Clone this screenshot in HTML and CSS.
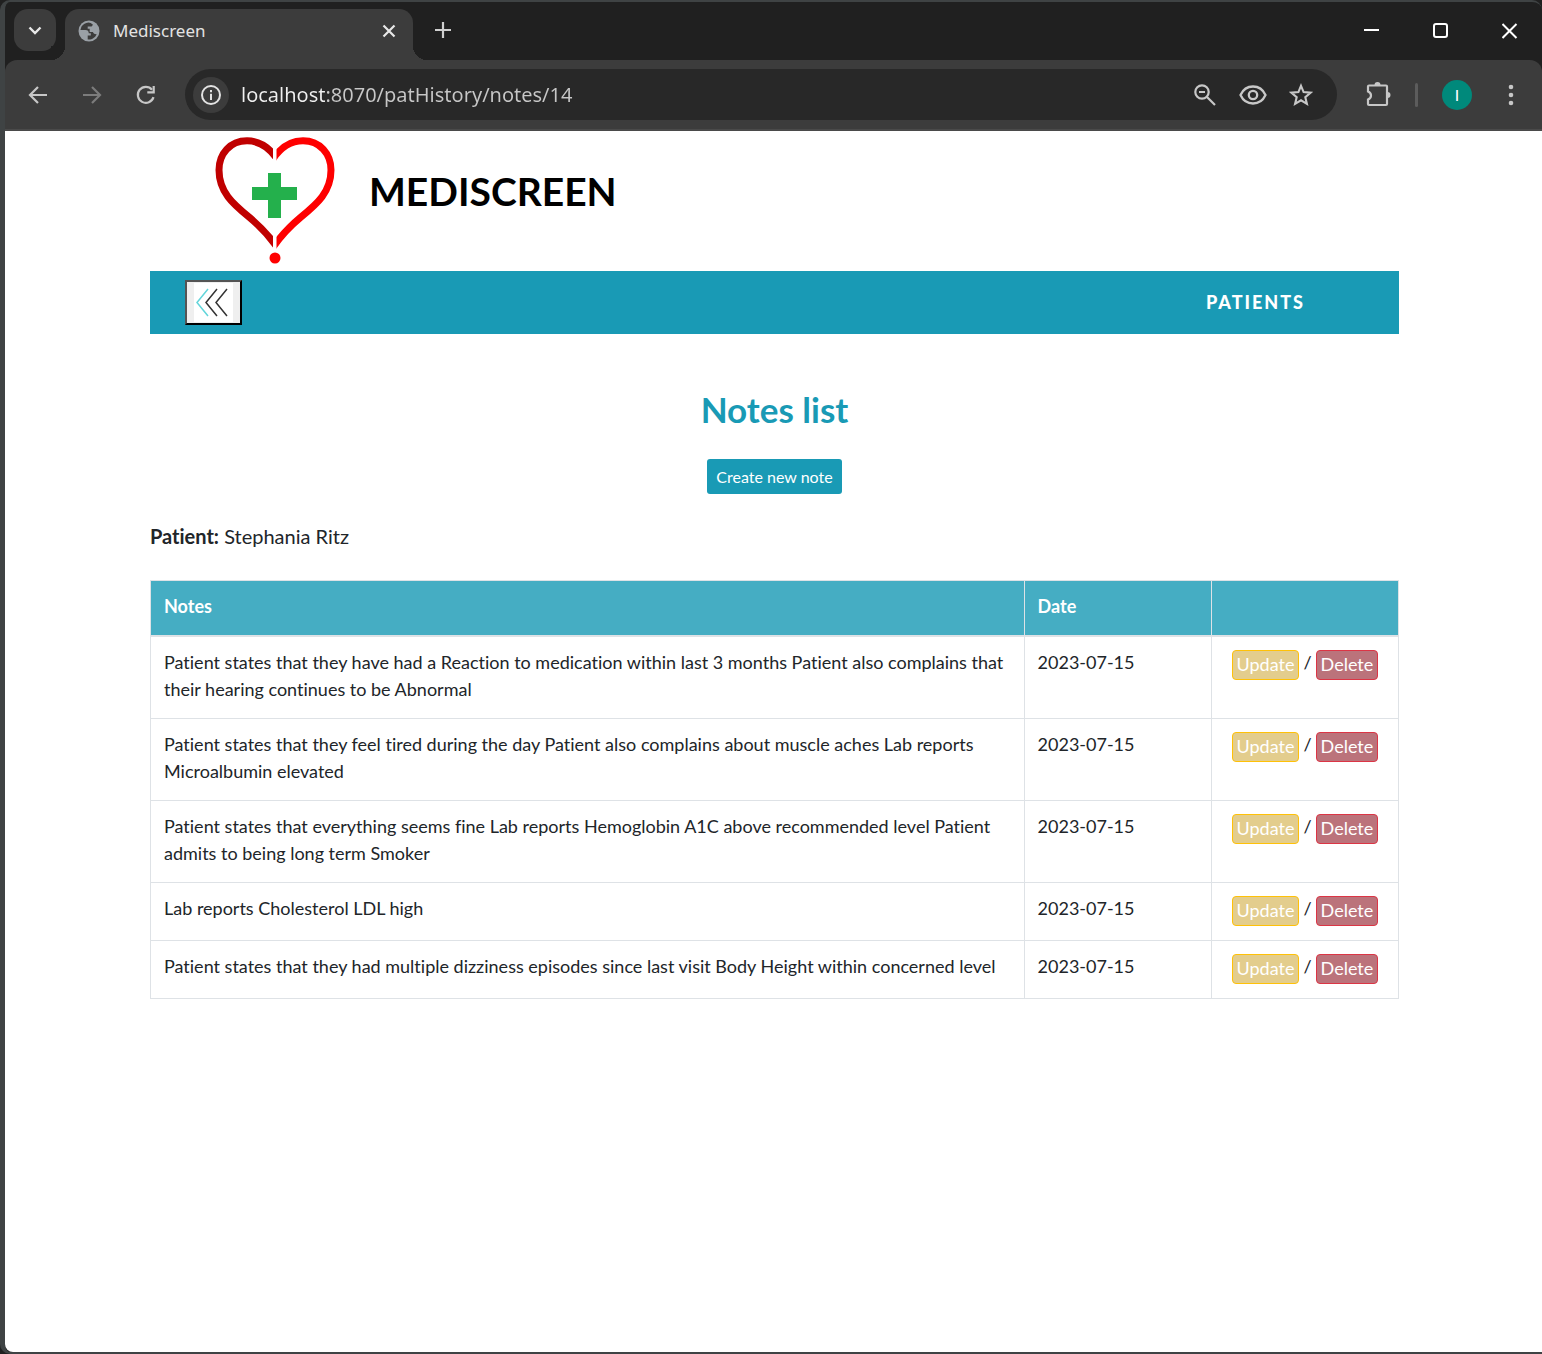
FILE: index.html
```html
<!DOCTYPE html>
<html lang="en">
<head>
<meta charset="utf-8">
<title>Mediscreen</title>
<link rel="stylesheet" href="styles.css">
</head>
<body>
<div class="window">
  <div class="tabstrip">
    <button class="tab-search" aria-label="Search tabs">
      <svg width="14" height="14" viewBox="0 0 14 14"><path d="M1.500 4.500L7 10l5.500-5.500" fill="none" stroke="#e8e8e8" stroke-width="2.400"/></svg>
    </button>
    <div class="tab">
      <svg class="globe" width="22" height="22" viewBox="0 0 22 22"><circle cx="11" cy="11" r="10.500" fill="#9aa0a6"/><path d="M10.500 2.500Q6 3 3.500 6.500L2.400 10h5.100c2.200 0 3.300 1.200 3.300 3.300h2v2.200H9.700V19.500c4 .5 7.500-1.800 9-5.200-1.700.3-3.100-.6-3.800-2.200h-3.200V8.800h-2V6.600h2.800c1.500 0 2.200-.8 2.200-2.300C13.400 3.500 12 2.500 10.500 2.500z" fill="#3c3c3c"/></svg>
      <span class="tab-title">Mediscreen</span>
      <button class="plain tab-close" aria-label="Close tab">
        <svg width="14" height="14" viewBox="0 0 14 14"><path d="M1.500 1.500l11 11m0-11l-11 11" stroke="#e8e8e8" stroke-width="2.200"/></svg>
      </button>
    </div>
    <button class="plain new-tab" aria-label="New tab">
      <svg width="16" height="16" viewBox="0 0 16 16"><path d="M8 0v16M0 8h16" stroke="#d0d0d0" stroke-width="2.200"/></svg>
    </button>
    <div class="window-controls">
      <button class="plain" aria-label="Minimize"><svg width="16" height="16" viewBox="0 0 16 16"><path d="M0 7h15" stroke="#fff" stroke-width="2"/></svg></button>
      <button class="plain" aria-label="Maximize"><svg width="16" height="16" viewBox="0 0 16 16"><rect x="1" y="1" width="13" height="13" rx="2" fill="none" stroke="#fff" stroke-width="2"/></svg></button>
      <button class="plain" aria-label="Close"><svg width="16" height="16" viewBox="0 0 16 16"><path d="M.5 1l14 14M14.500 1l-14 14" stroke="#fff" stroke-width="2"/></svg></button>
    </div>
  </div>

  <div class="toolbar">
    <div class="nav-buttons">
      <button class="plain" aria-label="Back"><svg width="20" height="20" viewBox="0 0 20 20"><path d="M19 10H2.500M10 2l-8 8 8 8" fill="none" stroke="#c7c7c7" stroke-width="2.200"/></svg></button>
      <button class="plain" aria-label="Forward"><svg width="20" height="20" viewBox="0 0 20 20"><path d="M1 10h16.500M10 2l8 8-8 8" fill="none" stroke="#7c7c7c" stroke-width="2.200"/></svg></button>
      <button class="plain" aria-label="Reload"><svg width="20" height="20" viewBox="0 0 20 20"><path d="M17.500 12.200A8 8 0 1 1 16 4.700" fill="none" stroke="#c7c7c7" stroke-width="2.200"/><path d="M18.800 1v7.500h-7.500V6.300h5.300V1z" fill="#c7c7c7"/></svg></button>
    </div>
    <div class="omnibox">
      <button class="site-info" aria-label="View site information"><svg width="22" height="22" viewBox="0 0 22 22"><circle cx="11" cy="11" r="9" fill="none" stroke="#e3e3e3" stroke-width="2"/><path d="M11 9.800V16M11 6v2.200" stroke="#e3e3e3" stroke-width="2"/></svg></button>
      <input class="url" type="text" aria-label="Address" value="localhost:8070/patHistory/notes/14">
      <button class="plain" aria-label="Zoom"><svg width="24" height="24" viewBox="0 0 24 24"><g fill="none" stroke="#c7c7c7" stroke-width="2.200"><circle cx="9" cy="9" r="6.700"/><path d="M14 14l8 8M6 9h6"/></g></svg></button>
      <button class="plain" aria-label="Preview"><svg width="28" height="22" viewBox="0 0 28 22"><g fill="none" stroke="#c7c7c7" stroke-width="2.300"><path d="M1.500 11C4 5.500 8.500 2.500 14 2.500S24 5.500 26.500 11C24 16.500 19.500 19.500 14 19.500S4 16.500 1.500 11z"/><circle cx="14" cy="11" r="4.200"/></g></svg></button>
      <button class="plain" aria-label="Bookmark"><svg width="24" height="24" viewBox="0 0 24 24"><path d="M12 2.800l2.600 6.300 6.900.6-5.200 4.500 1.600 6.700L12 17.300l-5.900 3.600 1.600-6.700-5.200-4.500 6.900-.6z" fill="none" stroke="#c7c7c7" stroke-width="2.100"/></svg></button>
    </div>
    <button class="plain extensions" aria-label="Extensions"><svg width="26" height="26" viewBox="0 0 26 26"><path d="M4 3.500h17a1 1 0 0 1 1 1V22a1 1 0 0 1-1 1H4a1 1 0 0 1-1-1v-4.500c4-1.500 4-6.500 0-8V4.500a1 1 0 0 1 1-1z" fill="none" stroke="#c7c7c7" stroke-width="2.200"/><path d="M9.500 3a3 3 0 0 1 6 0zM22.500 10a3 3 0 0 1 0 6z" fill="#c7c7c7"/></svg></button>
    <span class="divider"></span>
    <button class="avatar" aria-label="Profile">I</button>
    <button class="plain menu" aria-label="Menu"><svg width="6" height="22" viewBox="0 0 6 22"><g fill="#c7c7c7"><circle cx="3" cy="3" r="2.300"/><circle cx="3" cy="11" r="2.300"/><circle cx="3" cy="19" r="2.300"/></g></svg></button>
  </div>

  <main class="page">
    <div class="container">
      <header class="brand">
        <svg class="logo" width="120" height="128" viewBox="0 0 120 128">
          <defs>
            <clipPath id="left-half"><path d="M0 0h58v128H0z"/></clipPath>
            <clipPath id="right-half"><path d="M61.500 0H120v128H61.500z"/></clipPath>
          </defs>
          <g fill="none" stroke-width="7">
            <path clip-path="url(#left-half)" d="M64 26C55 11 45 4.800 32 4.800C15 4.800 4 18 4 34C4 56 18 68 34 81C46 91 54 99 64 114" stroke="#c00000"/>
            <path clip-path="url(#right-half)" d="M56 26C65 11 75 4.800 88 4.800C105 4.800 116 18 116 34C116 56 102 68 86 81C74 91 66 99 56 114" stroke="#fe0000"/>
          </g>
          <path d="M53 37h13v14h16v13H66v18H53V64H37V51h16z" fill="#24b04c"/>
          <circle cx="60" cy="122" r="5.500" fill="#fe0000"/>
        </svg>
        <h1>MEDISCREEN</h1>
      </header>
      <nav class="navbar">
        <button class="go-back" aria-label="Go back">
          <svg width="39" height="39" viewBox="0 0 39 39"><path d="M0 0h39v39H0z" fill="#fff"/><g fill="none" stroke-width="1.500"><path d="M14 6L3 19.500 14 33" stroke="#62d5da"/><path d="M23 6L12 19.500 23 33M33 6L22 19.500 33 33" stroke="#333"/></g></svg>
        </button>
        <a class="nav-link" href="#">PATIENTS</a>
      </nav>

      <h2>Notes list</h2>
      <div class="create"><button class="create-note">Create new note</button></div>
      <p class="patient"><strong>Patient:</strong> Stephania Ritz</p>

      <table class="notes">
        <colgroup><col class="col-notes"><col class="col-date"><col class="col-actions"></colgroup>
        <thead><tr><th scope="col">Notes</th><th scope="col">Date</th><th></th></tr></thead>
        <tbody>
          <tr><td>Patient states that they have had a Reaction to medication within last 3 months Patient also complains that their hearing continues to be Abnormal</td><td>2023-07-15</td><td><div class="actions"><a class="btn update" href="#">Update</a><span>/</span><a class="btn delete" href="#">Delete</a></div></td></tr>
          <tr><td>Patient states that they feel tired during the day Patient also complains about muscle aches Lab reports Microalbumin elevated</td><td>2023-07-15</td><td><div class="actions"><a class="btn update" href="#">Update</a><span>/</span><a class="btn delete" href="#">Delete</a></div></td></tr>
          <tr><td>Patient states that everything seems fine Lab reports Hemoglobin A1C above recommended level Patient admits to being long term Smoker</td><td>2023-07-15</td><td><div class="actions"><a class="btn update" href="#">Update</a><span>/</span><a class="btn delete" href="#">Delete</a></div></td></tr>
          <tr><td>Lab reports Cholesterol LDL high</td><td>2023-07-15</td><td><div class="actions"><a class="btn update" href="#">Update</a><span>/</span><a class="btn delete" href="#">Delete</a></div></td></tr>
          <tr><td>Patient states that they had multiple dizziness episodes since last visit Body Height within concerned level</td><td>2023-07-15</td><td><div class="actions"><a class="btn update" href="#">Update</a><span>/</span><a class="btn delete" href="#">Delete</a></div></td></tr>
        </tbody>
      </table>
    </div>
  </main>
</div>
</body>
</html>
```
FILE: styles.css
```css
* { box-sizing: border-box; }

body {
  margin: 0;
  background: #202020;
  color: #212529;
  font: 18px/27px Lato, "Liberation Sans", sans-serif;
  font-variant-ligatures: none;
}

button { font: inherit; padding: 0; border: 0; cursor: pointer; }
svg { display: block; }
.plain { background: none; }

/* Browser window */
.window {
  display: flex;
  flex-direction: column;
  min-height: 100vh;
  border: solid #3f4344;
  border-width: 2px 0 2px 5px;
  border-radius: 10px 10px 0 10px;
  background: #202020;
}

.tabstrip {
  display: flex;
  align-items: flex-start;
  height: 58px;
  padding: 7px 24px 0 9px;
}

.tab-search {
  display: grid;
  place-items: center;
  width: 42px;
  height: 42px;
  border-radius: 14px;
  background: #3c3c3c;
}

.tab {
  position: relative;
  display: flex;
  align-items: center;
  width: 348px;
  height: 51px;
  margin-left: 9px;
  padding: 0 17px 8px 13px;
  border-radius: 14px 14px 0 0;
  background: #3c3c3c;
}

/* Flared feet that join the active tab to the toolbar */
.tab::before,
.tab::after {
  content: "";
  position: absolute;
  bottom: 0;
  width: 14px;
  height: 14px;
}
.tab::before { left: -14px; background: radial-gradient(circle at 0 0, #202020 14px, #3c3c3c 14px); }
.tab::after { right: -14px; background: radial-gradient(circle at 100% 0, #202020 14px, #3c3c3c 14px); }

.tab-title {
  margin-left: 13px;
  color: #e3e3e3;
  font: 17px/24px "Noto Sans", sans-serif;
}
.tab-close { margin-left: auto; }
.new-tab { margin: 13px 0 0 22px; }

.window-controls {
  display: flex;
  gap: 53px;
  margin: 14px 0 0 auto;
}

.toolbar {
  display: flex;
  align-items: center;
  height: 71px;
  padding: 0 28px 0 23px;
  border-bottom: 2px solid #4a4a4a;
  border-radius: 12px 12px 0 0;
  background: #3c3c3c;
}

.nav-buttons {
  display: flex;
  gap: 34px;
  margin-right: 29px;
}

.omnibox {
  display: flex;
  flex: 1;
  align-items: center;
  gap: 22px;
  height: 51px;
  padding: 0 24px 0 8px;
  border-radius: 26px;
  background: #282828;
}

.site-info {
  display: grid;
  place-items: center;
  width: 36px;
  height: 36px;
  border-radius: 50%;
  background: #3c3c3c;
}

/* The host part of the address is brighter than its path */
.url {
  flex: 1;
  min-width: 0;
  margin-left: -10px;
  padding: 0;
  border: 0;
  outline: 0;
  background: linear-gradient(90deg, #f0f0f0 84px, #c7c7c7 84px);
  background-clip: text;
  color: transparent;
  font: 20px/28px "Noto Sans", sans-serif;
}

.extensions { margin-left: 28px; }

.divider {
  width: 3px;
  height: 24px;
  margin: 0 24px;
  border-radius: 2px;
  background: #5c5c5c;
}

.avatar {
  width: 30px;
  height: 30px;
  border-radius: 50%;
  background: #00897b;
  color: #fff;
  font-size: 16px;
}
.menu { margin-left: 36px; }

/* Page */
.page {
  flex: 1;
  border-radius: 0 0 0 8px;
  background: #fff;
}

.container {
  max-width: 1283px;
  margin: 0 auto;
  padding: 0 16px 0 18px;
}

.brand {
  display: flex;
  align-items: flex-start;
  gap: 34px;
  height: 140px;
  padding: 5px 0 0 65px;
}

h1 {
  margin: 30px 0 0;
  color: #000;
  font-size: 39px;
  font-weight: 700;
  line-height: 50px;
}

.navbar {
  display: flex;
  align-items: center;
  justify-content: space-between;
  height: 63px;
  padding: 0 94px 0 35px;
  background: #199ab5;
}

.go-back {
  display: grid;
  place-items: center;
  width: 57px;
  height: 45px;
  border: 2px outset #000;
  background: #efefef;
}

.nav-link {
  color: #fff;
  font-weight: 900;
  letter-spacing: 2px;
  text-decoration: none;
}

h2 {
  margin: 53px 0 28px;
  color: #199ab5;
  font-size: 35px;
  font-weight: 700;
  line-height: 44px;
  text-align: center;
}

.create { text-align: center; }

.create-note {
  height: 35px;
  padding: 0 9px 1px;
  border-radius: 3px;
  background: #199ab5;
  color: #fff;
  font-size: 16px;
  vertical-align: top;
}

.patient {
  margin: 27px 0 29px;
  font-size: 20px;
  line-height: 30px;
}

.notes {
  width: 100%;
  table-layout: fixed;
  border-collapse: collapse;
}
.col-notes { width: 70%; }
.col-date,
.col-actions { width: 15%; }

.notes th,
.notes td {
  padding: 12px 13px 15px;
  border: 1px solid #dee2e6;
  text-align: left;
  vertical-align: top;
}

.notes th {
  border-bottom-width: 2px;
  background: #45adc3;
  color: #fff;
  font-weight: 700;
}

.notes td:last-child { padding-bottom: 14px; }

.actions {
  display: flex;
  align-items: flex-start;
  justify-content: center;
  gap: 4px;
}

.btn {
  margin-top: 1px;
  padding: 0 4px 1px;
  border: 1px solid;
  border-radius: 4px;
  color: #fff;
  line-height: 27px;
  text-decoration: none;
}
.update { border-color: #ffc107; background: #e3cd8d; }
.delete { border-color: #dc3545; background: #bb737b; }
```
